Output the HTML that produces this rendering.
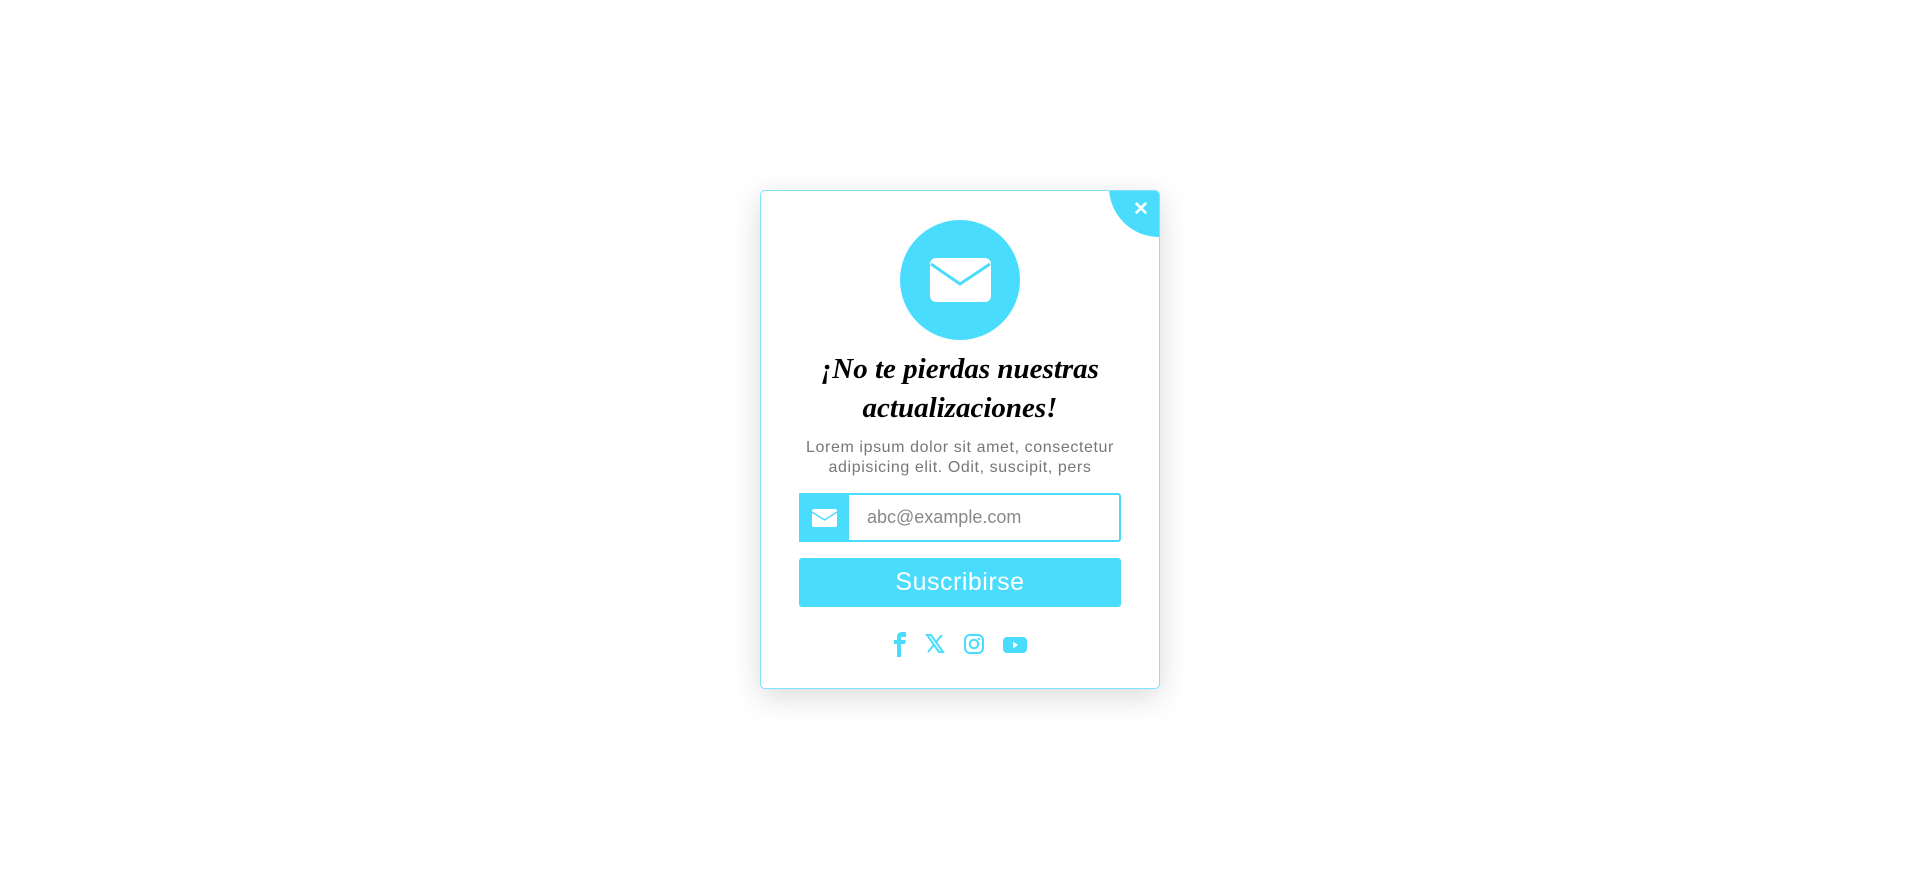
<!DOCTYPE html>
<html><head><style>
*{box-sizing:border-box;margin:0;padding:0}
body{width:1920px;height:879px;background:#fff;position:relative;overflow:hidden;font-family:"Liberation Sans",sans-serif}
.card{position:absolute;left:760px;top:190px;width:400px;height:499px;border:1.5px solid #7fe3fb;border-radius:5px;background:#fff;box-shadow:0 8px 30px rgba(0,0,0,.15);overflow:hidden}
.close{position:absolute;right:-50px;top:-54px;width:100px;height:100px;border-radius:50%;background:#4adcfc}
.x{position:absolute;left:1130px;top:199px;width:22px;height:22px;color:#fff;font-size:19px;font-weight:bold;text-align:center;line-height:22px}
.circ{position:absolute;left:900px;top:220px;width:120px;height:120px;border-radius:50%;background:#4adcfc}
h1{position:absolute;left:760px;width:400px;top:350px;text-align:center;font:bold italic 29px/39px "Liberation Serif",serif;color:#000}
p{position:absolute;left:760px;width:400px;top:438px;text-align:center;font-size:16px;line-height:20px;color:#777;letter-spacing:.6px}
.inp{position:absolute;left:799px;top:493px;width:322px;height:49px;border:2px solid #4adcfc;border-radius:3px}
.ib{position:absolute;left:0;top:-2px;width:50px;height:49px;background:#4adcfc;margin-left:-2px}
.ph{position:absolute;left:66px;top:12px;font-size:18px;color:#888}
.btn{position:absolute;left:799px;top:558px;width:322px;height:49px;background:#4adcfc;border-radius:3px;color:#fff;font-size:25px;text-align:center;line-height:49px;letter-spacing:.5px}
</style></head><body>
<div class="card"><div class="close"></div></div>
<div class="x">✕</div>
<div class="circ"><svg width="120" height="120" viewBox="0 0 120 120"><rect x="30" y="38" width="61" height="44" rx="6" fill="#fff"/><path d="M31 44 L60 64 L90 44" fill="none" stroke="#4adcfc" stroke-width="3"/></svg></div>
<h1>¡No te pierdas nuestras<br>actualizaciones!</h1>
<p>Lorem ipsum dolor sit amet, consectetur<br>adipisicing elit. Odit, suscipit, pers</p>
<div class="inp"><div class="ib"><svg width="50" height="49" viewBox="0 0 50 49"><rect x="13" y="16" width="25" height="18" rx="2" fill="#fff"/><path d="M13 19 L25.5 27 L38 19" fill="none" stroke="#4adcfc" stroke-width="1.5"/></svg></div><div class="ph">abc@example.com</div></div>
<div class="btn">Suscribirse</div>
<svg style="position:absolute;left:885px;top:629px" width="150" height="30" viewBox="0 0 150 30">
<path d="M17 8h4V3h-4c-3 0-5 2-5 5v3h-3v4h3v13h4V15h4l1-4h-5V8z" fill="#4adcfc"/>
<path d="M42 6h4l12 17h-4zM43 23l6-7M51 13l6-7" stroke="#4adcfc" stroke-width="2" fill="none"/>
<rect x="80" y="6" width="18" height="18" rx="5" fill="none" stroke="#4adcfc" stroke-width="2"/><circle cx="89" cy="15" r="4.3" fill="none" stroke="#4adcfc" stroke-width="2"/><circle cx="94" cy="10" r="1.2" fill="#4adcfc"/>
<rect x="118" y="8" width="24" height="16" rx="4" fill="#4adcfc"/><path d="M128 12.5v7l5-3.5z" fill="#fff"/>
</svg>
</body></html>
